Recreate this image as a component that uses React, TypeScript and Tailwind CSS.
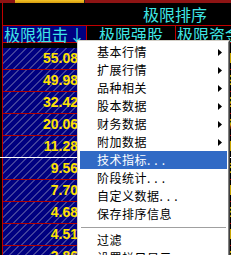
import React from "react";

const hatch =
  "bg-[#000080] bg-[repeating-linear-gradient(135deg,transparent_0px,transparent_4.4px,#40409a_4.4px,#40409a_5.66px)]";

const values = ["55.08", "49.98", "32.42", "20.06", "11.28", "9.56", "7.70", "4.68", "4.51", "3.86"];
const rightValues = ["18.2", "9.8", "22.1", "7.4", "13.6", "5.2", "16.9", "8.3", "11.0", "6.5"];

type MenuItem = { label: string; dots?: boolean; sub?: boolean; active?: boolean } | "sep";

const menuItems: MenuItem[] = [
  { label: "基本行情", sub: true },
  { label: "扩展行情", sub: true },
  { label: "品种相关", sub: true },
  { label: "股本数据", sub: true },
  { label: "财务数据", sub: true },
  { label: "附加数据", sub: true },
  { label: "技术指标", dots: true, active: true },
  { label: "阶段统计", dots: true },
  { label: "自定义数据", dots: true },
  { label: "保存排序信息" },
  "sep",
  { label: "过滤" },
  { label: "设置栏目显示", dots: true },
];

const Arrow = ({ color }: { color: string }) => (
  <svg width="4" height="7" viewBox="0 0 4 7" className="shrink-0">
    <polygon points="0,0 4,3.5 0,7" fill={color} />
  </svg>
);

const ContextMenu = () => (
  <div className="absolute left-[77px] top-[40px] w-[153px] border-l border-t border-r border-[#d4d0c8] border-r-[#404040]">
    <div className="border-l border-t border-r border-white border-r-[#808080] bg-white p-[1px]">
      {menuItems.map((item, i) =>
        item === "sep" ? (
          <div key={i} className="flex h-[8px] items-center px-[1px]">
            <div className="h-px w-full bg-[#a0a0a0]" />
          </div>
        ) : (
          <div
            key={i}
            className={`flex h-[18px] items-center justify-between pl-[17px] pr-[5px] text-[12px] leading-[18px] ${
              item.active ? "bg-[#316ac5] text-white" : "text-black"
            }`}
          >
            <span className="whitespace-nowrap tracking-[0.5px]">
              {item.label}
              {item.dots && <span className="tracking-[4px]">...</span>}
            </span>
            {item.sub && <Arrow color={item.active ? "#fff" : "#000"} />}
          </div>
        )
      )}
    </div>
  </div>
);

export default function App() {
  return (
    <div
      className="relative h-[255px] w-[231px] overflow-hidden bg-black"
      style={{ fontFamily: '"Noto Sans CJK SC", "Liberation Sans", sans-serif' }}
    >
      {/* top strip */}
      <div className="flex h-[3px]">
        <div className="w-[15px] bg-[#8e1414]" />
        <div className="w-[69px] bg-[linear-gradient(#f4c426,#d49a10)]" />
        <div className="w-px bg-[#202020]" />
        <div className="flex-1 bg-[#8e1414]" />
      </div>

      <div className="ml-[2px] border-l border-[#c00000]">
        {/* title */}
        <div className="flex h-[23px] items-center border-b border-[#c00000] pl-[140px] text-[16px] text-[#3fe6e6]">
          极限排序
        </div>

        {/* header */}
        <div className="flex h-[17px] border-b border-[#c00000] text-[16px] leading-[16px] text-[#3fe6e6]">
          <div className="flex w-[83px] shrink-0 items-center bg-[#000080] pl-[1px]">
            极限狙击<span className="ml-[1px]">↓</span>
          </div>
          <div className="flex w-[89px] shrink-0 items-center justify-center whitespace-nowrap border-l border-[#c00000]">
            极限强股
          </div>
          <div className="flex w-[89px] shrink-0 items-center whitespace-nowrap border-l border-[#c00000] pl-[1px]">
            极限资金
          </div>
        </div>

        {/* rows */}
        {values.map((v, i) => (
          <div
            key={v}
            className={`flex border-b border-[#b00000] ${i === 0 ? "h-[27px] pt-[5px]" : "h-[22px]"}`}
          >
            <div
              className={`flex w-[83px] shrink-0 items-center justify-end pr-[8px] text-[14px] font-bold text-[#ffe200] ${hatch}`}
              style={{ fontFamily: '"Liberation Sans", Arial, sans-serif' }}
            >
              {v}
            </div>
            <div className={`w-[89px] shrink-0 border-l border-[#c00000] ${hatch}`} />
            <div
              className="flex w-[89px] shrink-0 items-center border-l border-[#c00000] pl-[50px] text-[14px] font-bold text-[#c8a400]"
              style={{ fontFamily: '"Liberation Sans", Arial, sans-serif' }}
            >
              {rightValues[i]}
            </div>
          </div>
        ))}
      </div>

      {/* cursor line */}
      <div className="absolute left-0 top-[157px] h-px w-full bg-white" />

      <ContextMenu />
    </div>
  );
}
